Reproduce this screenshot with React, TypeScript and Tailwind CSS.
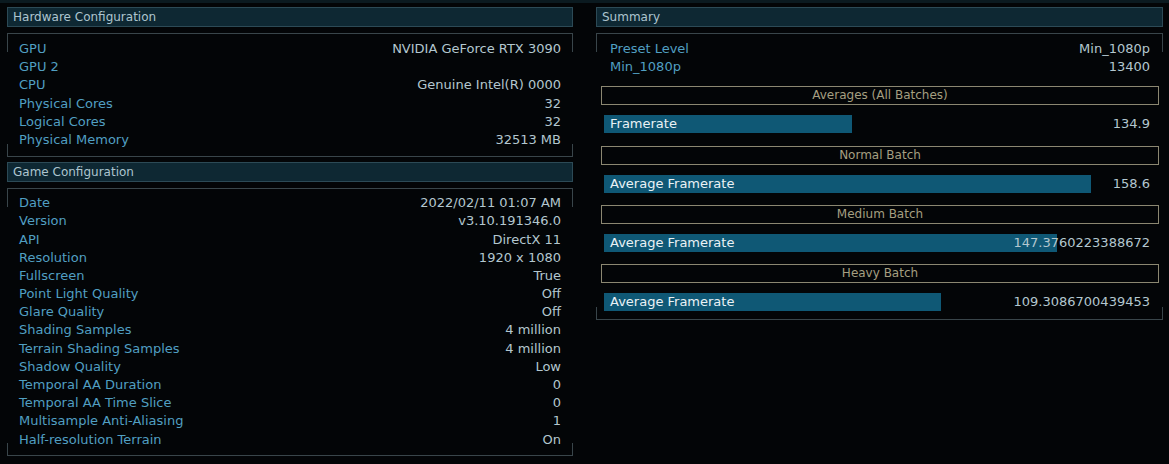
import type { ReactNode } from 'react';

const hardware: [string, string][] = [
  ['GPU', 'NVIDIA GeForce RTX 3090'],
  ['GPU 2', ''],
  ['CPU', 'Genuine Intel(R) 0000'],
  ['Physical Cores', '32'],
  ['Logical Cores', '32'],
  ['Physical Memory', '32513 MB'],
];

const game: [string, string][] = [
  ['Date', '2022/02/11 01:07 AM'],
  ['Version', 'v3.10.191346.0'],
  ['API', 'DirectX 11'],
  ['Resolution', '1920 x 1080'],
  ['Fullscreen', 'True'],
  ['Point Light Quality', 'Off'],
  ['Glare Quality', 'Off'],
  ['Shading Samples', '4 million'],
  ['Terrain Shading Samples', '4 million'],
  ['Shadow Quality', 'Low'],
  ['Temporal AA Duration', '0'],
  ['Temporal AA Time Slice', '0'],
  ['Multisample Anti-Aliasing', '1'],
  ['Half-resolution Terrain', 'On'],
];

const batches = [
  { title: 'Averages (All Batches)', label: 'Framerate', value: '134.9', width: 248 },
  { title: 'Normal Batch', label: 'Average Framerate', value: '158.6', width: 487 },
  { title: 'Medium Batch', label: 'Average Framerate', value: '147.3760223388672', width: 453 },
  { title: 'Heavy Batch', label: 'Average Framerate', value: '109.3086700439453', width: 337 },
];

function Header({ title }: { title: string }) {
  return (
    <div className="h-[20px] border border-[#2c4a56] bg-[#0e2833] pl-[5px] text-[12px] leading-[18px] text-[#adc5cf]">
      {title}
    </div>
  );
}

// box with full top/bottom lines and short corner ticks on the sides
function Frame({ children, className }: { children: ReactNode; className?: string }) {
  return (
    <div className={`relative border-y border-[#39454a] ${className ?? ''}`}>
      <span className="absolute left-0 top-0 h-[18px] w-px bg-[#39454a]" />
      <span className="absolute right-0 top-0 h-[18px] w-px bg-[#39454a]" />
      <span className="absolute bottom-0 left-0 h-[12px] w-px bg-[#39454a]" />
      <span className="absolute bottom-0 right-0 h-[12px] w-px bg-[#39454a]" />
      {children}
    </div>
  );
}

function Row({ label, value }: { label: string; value: string }) {
  return (
    <div className="flex h-[18.2px] items-center justify-between text-[13px] leading-[18.2px]">
      <span className="text-[#519fc2]">{label}</span>
      <span className="text-[#b3c7cf]">{value}</span>
    </div>
  );
}

export default function App() {
  return (
    <div
      className="h-screen w-full border-t-[3px] border-[#0b1a20] bg-[#030507] pl-[7px] pt-[4px]"
      style={{ fontFamily: '"DejaVu Sans", "Liberation Sans", sans-serif' }}
    >
      <div className="flex gap-[23px]">
        {/* left column */}
        <div className="w-[566px]">
          <Header title="Hardware Configuration" />
          <Frame className="mt-[6px] pb-[7px] pl-[12px] pr-[12px] pt-[6px]">
            {hardware.map(([l, v]) => (
              <Row key={l} label={l} value={v} />
            ))}
          </Frame>
          <div className="mt-[5px]">
            <Header title="Game Configuration" />
          </div>
          <Frame className="mt-[6px] pb-[6px] pl-[12px] pr-[12px] pt-[5px]">
            {game.map(([l, v]) => (
              <Row key={l} label={l} value={v} />
            ))}
          </Frame>
        </div>

        {/* right column */}
        <div className="w-[567px]">
          <Header title="Summary" />
          <Frame className="mt-[6px] pb-[8px] pt-[6px]">
            <div className="pl-[14px] pr-[13px]">
              <Row label="Preset Level" value="Min_1080p" />
              <Row label="Min_1080p" value="13400" />
            </div>
            <div className="mt-[10px] flex flex-col gap-[12.3px]">
              {batches.map((b) => (
                <div key={b.title}>
                  <div className="ml-[5px] mr-[4px] h-[19px] border border-[#8b8771] text-center text-[12px] leading-[17px] text-[#a59f81]">
                    {b.title}
                  </div>
                  <div className="relative mt-[10px] ml-[8px] h-[18px]">
                    <div
                      className="h-full bg-[#0f5875] pl-[6px] text-[13px] leading-[18px] text-[#eaf2f5]"
                      style={{ width: b.width }}
                    >
                      {b.label}
                    </div>
                    <span className="absolute right-[13px] top-0 text-[13px] leading-[18px] text-[#b3c7cf]">
                      {b.value}
                    </span>
                  </div>
                </div>
              ))}
            </div>
          </Frame>
        </div>
      </div>
    </div>
  );
}
